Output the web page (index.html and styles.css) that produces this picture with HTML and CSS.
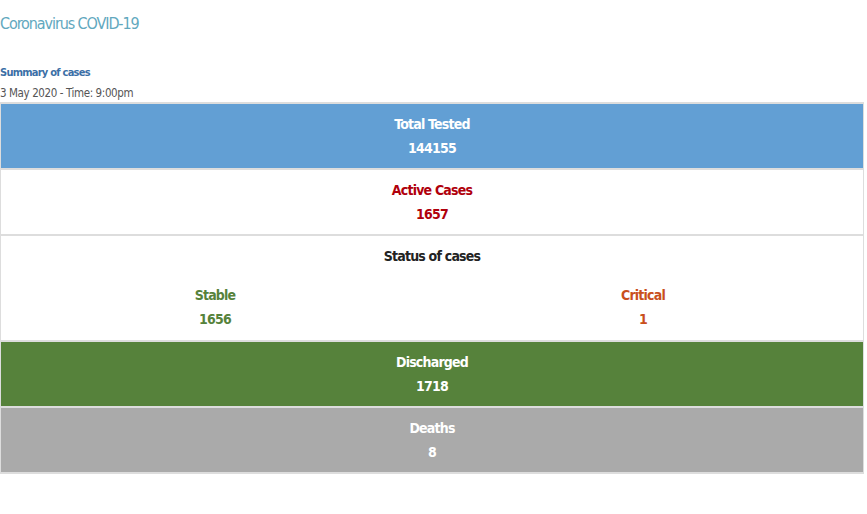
FILE: index.html
```html
<!DOCTYPE html>
<html>
<head>
<meta charset="utf-8">
<link rel="stylesheet" href="styles.css">
</head>
<body>
<h1 class="title">Coronavirus COVID-19</h1>
<div class="summary">
  <div class="summary-head">Summary of cases</div>
  <div class="summary-date">3 May 2020 - Time: 9:00pm</div>
</div>
<div class="board">
  <div class="card card-blue">
    <div class="label">Total Tested</div>
    <div class="value">144155</div>
  </div>
  <div class="card card-white text-red">
    <div class="label">Active Cases</div>
    <div class="value">1657</div>
  </div>
  <div class="card card-white card-status">
    <div class="label text-dark">Status of cases</div>
    <div class="split">
      <div class="split-col text-green">
        <div class="label">Stable</div>
        <div class="value">1656</div>
      </div>
      <div class="split-col text-orange">
        <div class="label">Critical</div>
        <div class="value">1</div>
      </div>
    </div>
  </div>
  <div class="card card-green">
    <div class="label">Discharged</div>
    <div class="value">1718</div>
  </div>
  <div class="card card-gray">
    <div class="label">Deaths</div>
    <div class="value">8</div>
  </div>
</div>
</body>
</html>
```
FILE: styles.css
```css
html, body {
  margin: 0;
  padding: 0;
  background: #fff;
}
body {
  font-family: "DejaVu Sans Condensed", "DejaVu Sans", sans-serif;
  font-stretch: condensed;
  width: 865px;
}
.title {
  margin: 0;
  padding-top: 13px;
  font-size: 16px;
  font-weight: normal;
  letter-spacing: -1.1px;
  color: #62a8be;
  line-height: 22px;
}
.summary {
  margin-top: 28px;
  line-height: 20px;
}
.summary-head {
  font-size: 11px;
  letter-spacing: -0.75px;
  font-weight: bold;
  color: #3b6fa6;
}
.summary-date {
  font-size: 11.5px;
  letter-spacing: -0.4px;
  color: #555;
}
.board {
  width: 864px;
  margin-top: -1px;
  border-bottom: 2px solid #ddd;
}
.card {
  border: 1px solid #ddd;
  border-top-width: 2px;
  border-bottom: none;
  padding: 8px 0;
  text-align: center;
  font-weight: bold;
  font-size: 14px;
  letter-spacing: -0.8px;
}
.label, .value {
  line-height: 24px;
}
.card-status {
  padding-bottom: 9px;
}
.card-blue { background: #629fd4; color: #fff; }
.card-white { background: #fff; }
.card-green { background: #56823b; color: #fff; }
.card-gray { background: #aaaaaa; color: #fff; }
.text-red { color: #b0000c; }
.text-dark { color: #222; }
.text-green { color: #56823b; }
.text-orange { color: #c9501c; }
.split {
  display: flex;
  margin-top: 15px;
  padding-right: 6px;
}
.split-col {
  flex: 1;
}
```
